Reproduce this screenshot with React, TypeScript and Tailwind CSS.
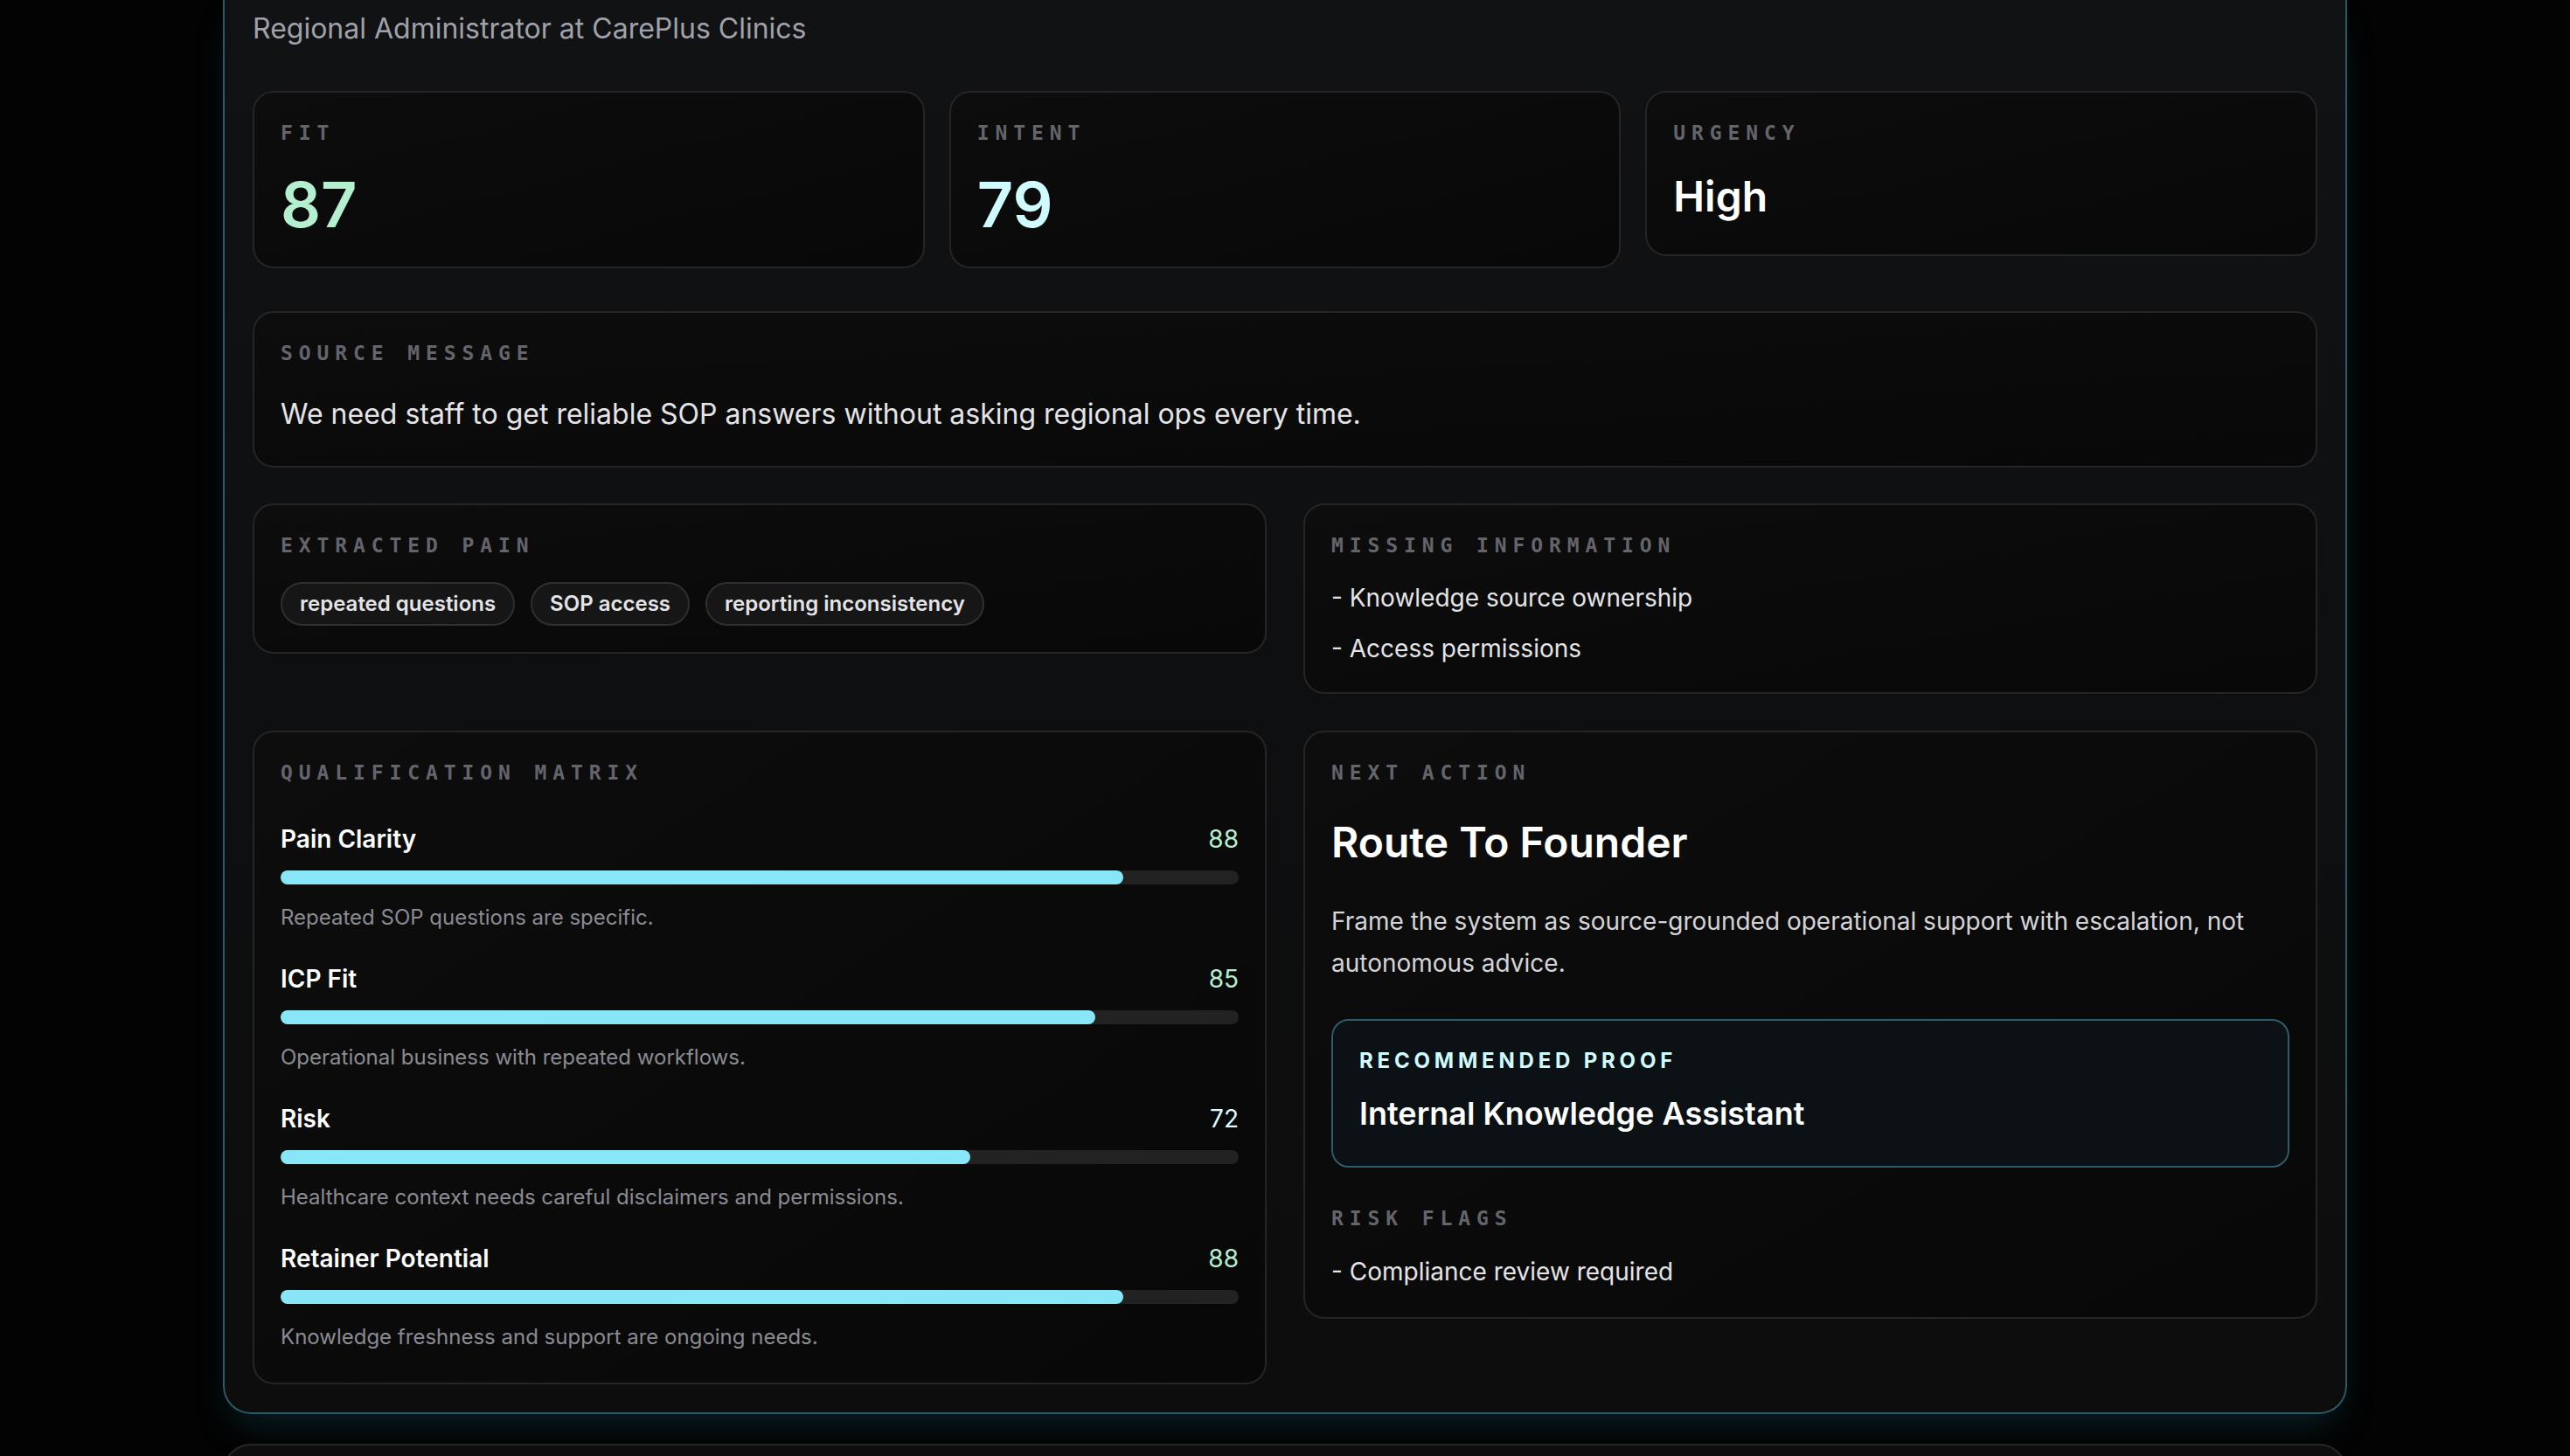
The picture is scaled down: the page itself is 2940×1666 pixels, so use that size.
import React from 'react';

const sans = "font-['Inter','Noto_Sans',sans-serif]";

interface Metric {
  label: string;
  value: number;
  note: string;
}

const metrics: Metric[] = [
  { label: 'Pain Clarity', value: 88, note: 'Repeated SOP questions are specific.' },
  { label: 'ICP Fit', value: 85, note: 'Operational business with repeated workflows.' },
  { label: 'Risk', value: 72, note: 'Healthcare context needs careful disclaimers and permissions.' },
  { label: 'Retainer Potential', value: 88, note: 'Knowledge freshness and support are ongoing needs.' },
];

const pains = ['repeated questions', 'SOP access', 'reporting inconsistency'];

function Label({ children }: { children: React.ReactNode }) {
  return (
    <div className="font-['DejaVu_Sans_Mono','Liberation_Mono',monospace] text-[23px] leading-[32px] font-bold tracking-[0.3em] uppercase text-[#64646c]">
      {children}
    </div>
  );
}

function Panel({ children, className = '' }: { children: React.ReactNode; className?: string }) {
  return (
    <div
      className={`rounded-[24px] border-2 border-[#252527] bg-gradient-to-br from-[#0d0d0e] to-[#080808] p-[30px] ${className}`}
    >
      {children}
    </div>
  );
}

function ScoreCard({ label, value, tone }: { label: string; value: string; tone: string }) {
  return (
    <Panel>
      <Label>{label}</Label>
      <div className={`mt-[25px] text-[72px] leading-[82px] font-semibold ${tone}`}>{value}</div>
    </Panel>
  );
}

export default function App() {
  return (
    <div className={`h-[1666px] overflow-hidden bg-[#030303] ${sans}`}>
      {/* Lead card, scrolled so its header sits above the fold */}
      <div className="mx-auto w-[2430px] rounded-b-[32px] border-x-2 border-b-2 border-[#2a5a66] bg-gradient-to-b from-[#101214] via-[#0e0f10] to-[#0d0d0d] px-[32px] pt-[9px] pb-[32px] shadow-[0_22px_40px_-12px_rgba(20,90,105,0.35)]">
        <div className="text-[32px] leading-[48px] text-[#a1a1aa]">Regional Administrator at CarePlus Clinics</div>

        {/* Scores */}
        <div className="mt-[47px] grid grid-cols-3 items-start gap-[28px]">
          <ScoreCard label="Fit" value="87" tone="text-[#b4f0d0]" />
          <ScoreCard label="Intent" value="79" tone="text-[#cffafe]" />
          <Panel>
            <Label>Urgency</Label>
            <div className="mt-[21px] text-[48px] leading-[72px] font-semibold text-white">High</div>
          </Panel>
        </div>

        {/* Source message */}
        <Panel className="mt-[49px]">
          <Label>Source message</Label>
          <p className="mt-[25px] text-[32px] leading-[58px] text-[#e4e4e7]">
            We need staff to get reliable SOP answers without asking regional ops every time.
          </p>
        </Panel>

        <div className="mt-[41px] grid grid-cols-2 items-start gap-x-[42px] gap-y-[42px]">
          <Panel>
            <Label>Extracted pain</Label>
            <div className="mt-[26px] flex flex-wrap gap-[18px]">
              {pains.map((p) => (
                <span
                  key={p}
                  className="rounded-full border-2 border-[#2f2f32] bg-[#161617] px-[20px] py-[7px] text-[24px] leading-[32px] font-semibold text-[#e4e4e7]"
                >
                  {p}
                </span>
              ))}
            </div>
          </Panel>

          <Panel>
            <Label>Missing information</Label>
            <ul className="mt-[24px] flex flex-col gap-[18px] text-[28px] leading-[40px] text-[#e4e4e7]">
              <li>- Knowledge source ownership</li>
              <li>- Access permissions</li>
            </ul>
          </Panel>

          {/* Qualification matrix */}
          <Panel className="pb-[32px]">
            <Label>Qualification matrix</Label>
            <div className="mt-[40px] flex flex-col gap-[30px]">
              {metrics.map((m) => (
                <div key={m.label}>
                  <div className="flex items-center justify-between text-[28px] leading-[40px]">
                    <span className="font-semibold text-white">{m.label}</span>
                    <span className={m.value >= 80 ? 'text-[#b4f0d0]' : 'text-[#dcfbff]'}>{m.value}</span>
                  </div>
                  <div className="mt-[16px] h-[16px] rounded-full bg-[#222223]">
                    <div className="h-full rounded-full bg-[#88e6f7]" style={{ width: `${m.value}%` }} />
                  </div>
                  <div className="mt-[18px] text-[24px] leading-[40px] text-[#8b8b93]">{m.note}</div>
                </div>
              ))}
            </div>
          </Panel>

          {/* Next action */}
          <Panel className="pb-[32px]">
            <Label>Next action</Label>
            <h2 className="mt-[32px] text-[48px] leading-[64px] font-semibold text-white">Route To Founder</h2>
            <p className="mt-[34px] text-[28px] leading-[48px] text-[#d4d4d8]">
              Frame the system as source-grounded operational support with escalation, not autonomous advice.
            </p>
            <div className="mt-[40px] rounded-[20px] border-2 border-[#2e5c69] bg-[#0b1115] p-[30px] pb-[32px]">
              <div className="text-[24px] leading-[32px] font-bold uppercase tracking-[0.2em] text-[#cffafe]">
                Recommended proof
              </div>
              <div className="mt-[16px] text-[36px] leading-[56px] font-semibold text-white">
                Internal Knowledge Assistant
              </div>
            </div>
            <div className="mt-[42px]">
              <Label>Risk flags</Label>
            </div>
            <ul className="mt-[25px] text-[28px] leading-[40px] text-[#e4e4e7]">
              <li>- Compliance review required</li>
            </ul>
          </Panel>
        </div>
      </div>

      {/* Next lead card, peeking in at the bottom */}
      <div className="mx-auto mt-[34px] h-[200px] w-[2430px] rounded-[32px] border-2 border-[#262628] bg-[#0e0e0f]" />
    </div>
  );
}
